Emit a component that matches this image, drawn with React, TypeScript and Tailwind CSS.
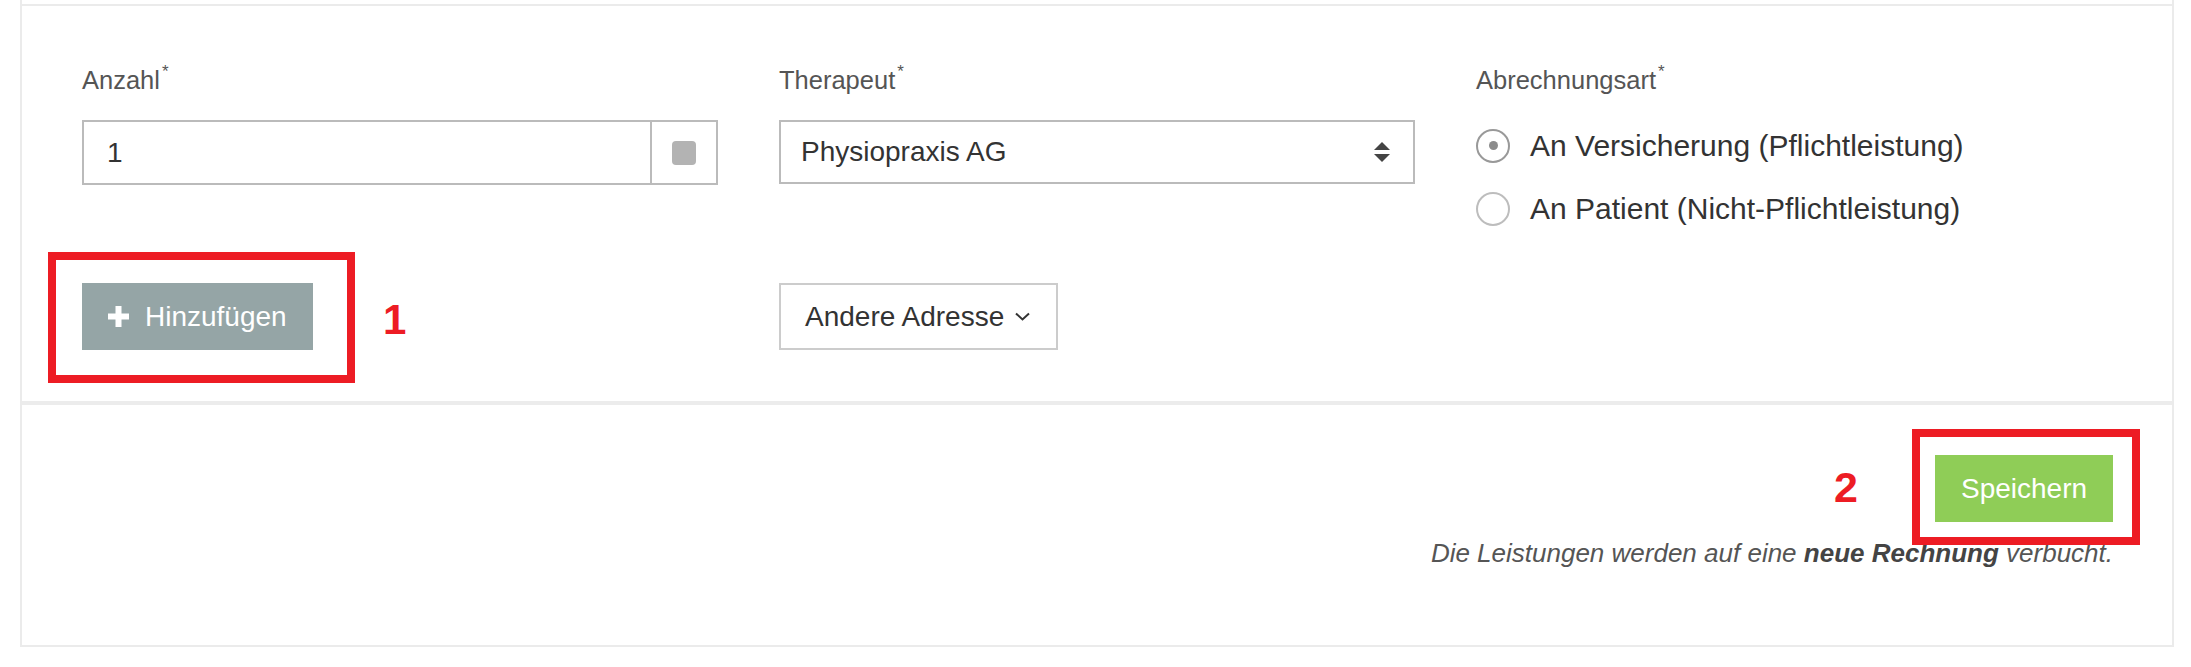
import React from "react";

const font = { fontFamily: '"Liberation Sans", Arial, sans-serif' };

function Label({ text }: { text: string }) {
  return (
    <div className="h-[36px] leading-[36px] text-[25.5px] text-[#555] whitespace-nowrap">
      {text}
      <span className="relative top-[-12px] ml-[2px] text-[17px] leading-none">*</span>
    </div>
  );
}

function Radio({ checked, label }: { checked: boolean; label: string }) {
  return (
    <div className="flex h-[63px] items-center">
      <div
        className={
          checked
            ? "flex h-[34px] w-[34px] items-center justify-center rounded-full border-2 border-[#999]"
            : "flex h-[34px] w-[34px] items-center justify-center rounded-full border-2 border-[#bdbdbd]"
        }
      >
        {checked && <div className="h-[9px] w-[9px] rounded-full bg-[#8c8c8c]" />}
      </div>
      <span className="ml-[20px] text-[30px] leading-[40px] text-[#333] whitespace-nowrap">{label}</span>
    </div>
  );
}

export default function App() {
  return (
    <div className="min-h-[667px] w-[2191px] bg-white" style={font}>
      <div className="ml-[20px] w-[2154px] border-x-2 border-b-2 border-[#ebebeb]">
        <div className="h-[4px]" />
        {/* top section */}
        <div className="border-t-2 border-[#ebebeb] px-[60px] pt-[56px] pb-[51px]">
          <div className="flex items-start gap-[61px]">
            {/* Anzahl */}
            <div className="w-[636px]">
              <Label text="Anzahl" />
              <div className="mt-[22px] flex h-[65px] border-2 border-[#bbb]">
                <div className="flex flex-1 items-center pl-[23px] text-[28px] text-[#333]">1</div>
                <div className="flex w-[66px] items-center justify-center border-l-2 border-[#bbb]">
                  <div className="h-[24px] w-[24px] rounded-[4px] bg-[#b3b3b3]" />
                </div>
              </div>
            </div>
            {/* Therapeut */}
            <div className="w-[636px]">
              <Label text="Therapeut" />
              <div className="mt-[22px] flex h-[64px] items-center justify-between border-2 border-[#bbb] pl-[20px] pr-[23px]">
                <span className="text-[28px] text-[#333]">Physiopraxis AG</span>
                <svg width="16" height="20" viewBox="0 0 16 20">
                  <path d="M8 0L16 8H0z M0 12h16L8 20z" fill="#444" />
                </svg>
              </div>
            </div>
            {/* Abrechnungsart */}
            <div className="w-[636px]">
              <Label text="Abrechnungsart" />
              <div className="mt-[16px]">
                <Radio checked label="An Versicherung (Pflichtleistung)" />
                <Radio checked={false} label="An Patient (Nicht-Pflichtleistung)" />
              </div>
            </div>
          </div>

          <div className="mt-[43px] flex items-start gap-[61px]">
            <div className="w-[636px]">
              <div className="relative w-[231px]">
                <div className="pointer-events-none absolute left-[-34px] top-[-31px] h-[131px] w-[307px] border-[8px] border-[#ed1c24]" />
                <button className="flex h-[67px] w-[231px] items-center bg-[#95a5a6] pl-[26px] text-[28px] text-white">
                  <svg width="21" height="21" viewBox="0 0 21 21" className="mr-[16px]">
                    <path d="M10.5 0v21M0 10.5h21" stroke="#fff" strokeWidth="6" />
                  </svg>
                  Hinzufügen
                </button>
                <span className="absolute left-[301px] top-[16px] text-[42px] font-bold leading-none text-[#ed1c24]">1</span>
              </div>
            </div>
            <div className="w-[636px]">
              <button className="flex h-[67px] w-[279px] items-center border-2 border-[#ccc] pl-[24px] text-[28px] text-[#333]">
                Andere Adresse
                <svg width="15" height="9" viewBox="0 0 15 9" className="ml-[11px]">
                  <path d="M1 1.5l6.5 6 6.5-6" stroke="#333" strokeWidth="2" fill="none" />
                </svg>
              </button>
            </div>
            <div className="w-[636px]" />
          </div>
        </div>

        {/* footer */}
        <div className="border-t-4 border-[#ececec] px-[59px] pt-[50px] pb-[74px]">
          <div className="flex flex-col items-end">
            <div className="relative">
              <div className="pointer-events-none absolute left-[-23px] top-[-26px] h-[116px] w-[228px] border-[8px] border-[#ed1c24]" />
              <span className="absolute left-[-101px] top-[11px] text-[43px] font-bold leading-none text-[#ed1c24]">2</span>
              <button className="flex h-[67px] w-[178px] items-center justify-center bg-[#8fcd57] text-[28px] text-white">
                Speichern
              </button>
            </div>
            <p className="mt-[13px] h-[36px] text-[26px] italic leading-[36px] text-[#555] whitespace-nowrap">
              Die Leistungen werden auf eine <b className="text-[#444]">neue Rechnung</b> verbucht.
            </p>
          </div>
        </div>
      </div>
    </div>
  );
}
